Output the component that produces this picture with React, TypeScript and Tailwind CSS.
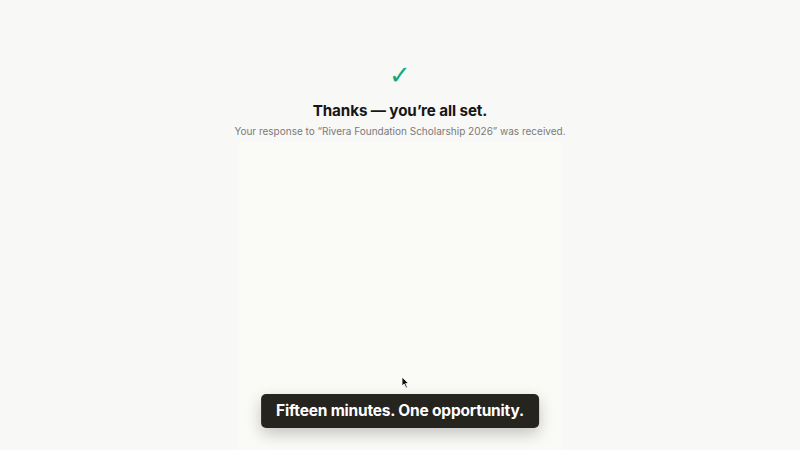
export default function App() {
  return (
    <div
      className="relative w-[800px] h-[450px] overflow-hidden bg-[#f8f8f7] flex flex-col items-center"
      style={{ fontFamily: "Inter, 'Liberation Sans', sans-serif" }}
    >
      <div className="flex flex-col items-center w-[326px] h-full">
        <div
          className="mt-[58px] text-[26px] leading-[34px] text-[#14a874]"
          style={{ fontFamily: "'DejaVu Sans', sans-serif" }}
        >
          ✓
        </div>
        <h1 className="mt-[9px] text-[15.2px] leading-[20px] font-bold text-[#161616] tracking-[-0.1px] whitespace-nowrap">
          Thanks — you’re all set.
        </h1>
        <p className="mt-[3px] text-[10px] leading-[14px] text-[#7a7a7a] whitespace-nowrap">
          Your response to “Rivera Foundation Scholarship 2026” was received.
        </p>
        <div className="mt-[4px] w-full flex-1 bg-[#fafaf7]" />
      </div>
      <svg
        className="absolute left-[401px] top-[376px]"
        width="9"
        height="13"
        viewBox="0 0 9 13"
      >
        <path d="M1 1 L1 10 L3.2 8 L5 12 L6.4 11.3 L4.7 7.5 L7.6 7.5 Z" fill="#111" stroke="#fff" strokeWidth="0.8" />
      </svg>
      <div className="absolute left-1/2 -translate-x-1/2 bottom-[22px] h-[34px] px-[15px] flex items-center rounded-[5px] bg-[#26241f] shadow-[0_6px_16px_rgba(0,0,0,0.22)]">
        <span className="text-[15.5px] font-bold text-white tracking-[-0.2px] whitespace-nowrap">
          Fifteen minutes. One opportunity.
        </span>
      </div>
    </div>
  );
}
